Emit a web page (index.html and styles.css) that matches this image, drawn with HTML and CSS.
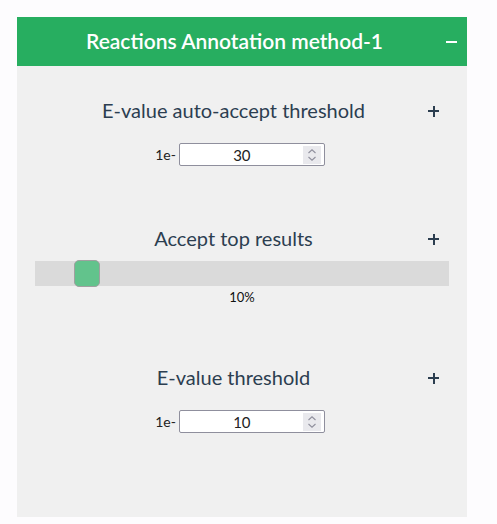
FILE: index.html
```html
<!DOCTYPE html>
<html>
<head>
<meta charset="utf-8">
<link rel="stylesheet" href="styles.css">
</head>
<body>
<div class="panel">
  <div class="panel-header">
    <span class="panel-title">Reactions Annotation method-1</span>
    <span class="collapse-icon"></span>
  </div>
  <div class="panel-body">
    <div class="section sec-first">
      <div class="section-head">
        <span class="section-title">E-value auto-accept threshold</span>
        <span class="plus-icon"></span>
      </div>
      <div class="field-row">
        <span class="prefix">1e-</span>
        <div class="num-field">
          <span class="num-value">30</span>
          <span class="spinner"><svg width="10" height="14" viewBox="0 0 10 14"><path d="M1.5 5 L5 1.8 L8.5 5 M1.5 9 L5 12.2 L8.5 9" fill="none" stroke="#8f8f9d" stroke-width="1.1"/></svg></span>
        </div>
      </div>
    </div>
    <div class="section sec-second">
      <div class="section-head">
        <span class="section-title">Accept top results</span>
        <span class="plus-icon"></span>
      </div>
      <div class="slider">
        <div class="slider-track">
          <div class="slider-thumb" style="margin-left: 39px"></div>
        </div>
        <div class="slider-value">10%</div>
      </div>
    </div>
    <div class="section sec-third">
      <div class="section-head">
        <span class="section-title">E-value threshold</span>
        <span class="plus-icon"></span>
      </div>
      <div class="field-row">
        <span class="prefix">1e-</span>
        <div class="num-field">
          <span class="num-value">10</span>
          <span class="spinner"><svg width="10" height="14" viewBox="0 0 10 14"><path d="M1.5 5 L5 1.8 L8.5 5 M1.5 9 L5 12.2 L8.5 9" fill="none" stroke="#8f8f9d" stroke-width="1.1"/></svg></span>
        </div>
      </div>
    </div>
  </div>
</div>
</body>
</html>
```
FILE: styles.css
```css
html, body {
  margin: 0;
  padding: 0;
  background: #fdfcfe;
}
body {
  font-family: Lato, "Open Sans", sans-serif;
  color: #222;
}
.panel {
  margin: 17px 0 0 17px;
  width: 450px;
}
.panel-header {
  height: 49px;
  background: #27ae60;
  display: flex;
  align-items: center;
  padding: 0 10px 3px 6px;
  box-sizing: border-box;
}
.panel-title {
  flex: 1;
  text-align: center;
  color: #fff;
  font-size: 21px;
  font-weight: 600;
}
.collapse-icon {
  width: 11px;
  height: 1.5px;
  background: #fff;
  margin-top: 4px;
}
.panel-body {
  background: #f0f0f0;
  padding: 32px 0 84px;
}
.section-head {
  display: flex;
  align-items: center;
  padding: 0 28px 0 22px;
  height: 24px;
}
.section-title {
  flex: 1;
  text-align: center;
  font-size: 20px;
  color: #2c3e50;
}
.plus-icon {
  width: 11px;
  height: 11px;
  position: relative;
  margin-top: 2px;
}
.plus-icon::before, .plus-icon::after {
  content: "";
  position: absolute;
  background: #2c3e50;
}
.plus-icon::before {
  left: 0; right: 0; top: 4.5px; height: 2px;
}
.plus-icon::after {
  top: 0; bottom: 0; left: 4.5px; width: 2px;
}
.sec-second { margin-top: 60px; }
.sec-third { margin-top: 60px; }
.field-row {
  display: flex;
  justify-content: center;
  align-items: center;
  gap: 3px;
  margin-top: 21px;
  padding-right: 4px;
}
.prefix {
  font-size: 14px;
  color: #222;
}
.num-field {
  width: 146px;
  height: 23px;
  box-sizing: border-box;
  border: 1px solid #8f8f9d;
  border-radius: 2px;
  background: #fff;
  display: flex;
  align-items: center;
  padding: 0 3px 0 1px;
}
.num-value {
  flex: 1;
  text-align: center;
  font-size: 15px;
  color: #222;
}
.spinner {
  width: 18px;
  height: 18px;
  background: #e9e9ed;
  display: flex;
  align-items: center;
  justify-content: center;
}
.slider {
  margin: 11px 18px 0;
}
.slider-track {
  height: 25px;
  background: #dadada;
  display: flex;
  align-items: center;
}
.slider-thumb {
  width: 26px;
  height: 27px;
  box-sizing: border-box;
  background: #62c38c;
  border: 1px solid #a0a0a0;
  border-radius: 5px;
}
.slider-value {
  text-align: center;
  font-size: 13px;
  margin-top: 3px;
  line-height: 16px;
  color: #111;
}
```
